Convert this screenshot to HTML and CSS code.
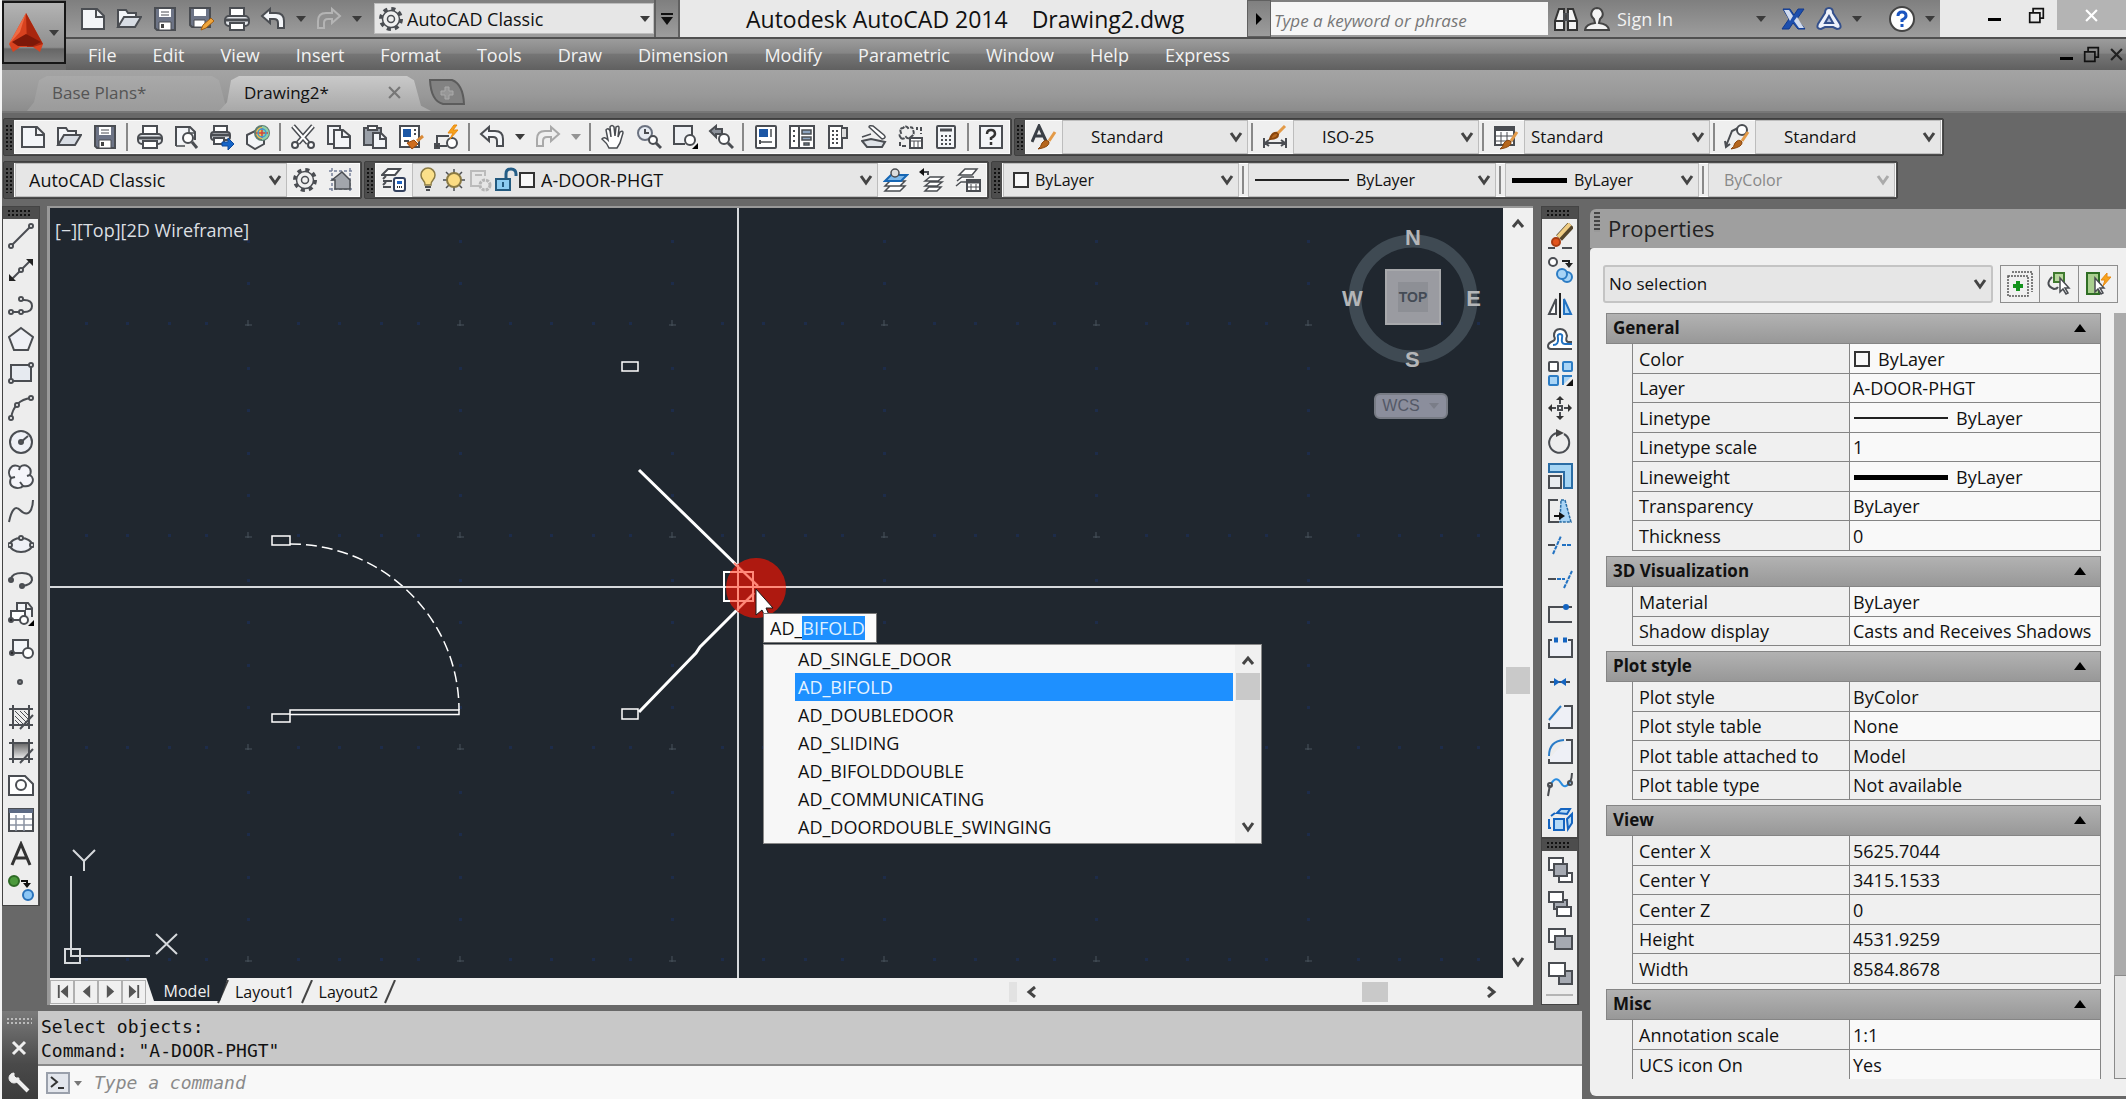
FILE: index.html
```html
<!DOCTYPE html>
<html lang="en">
<head>
<meta charset="utf-8">
<title>Autodesk AutoCAD 2014 - Drawing2.dwg</title>
<link rel="stylesheet" href="styles.css">
</head>
<body>
<svg class="sprite" aria-hidden="true">
  <defs>
    <linearGradient id="gridfade" x1="0" y1="0" x2="0" y2="1"><stop offset="0" stop-color="#666"/><stop offset="1" stop-color="#eee"/></linearGradient>
    <pattern id="minor" x="35" y="31" width="212" height="212" patternUnits="userSpaceOnUse">
      <g fill="#1d2c4a"><path d="M41 83h3v3h-3zM83 83h3v3h-3zM120 83h3v3h-3zM0 83h3v3h-3zM162 1h3v3h-3zM162 43h3v3h-3zM162 128h3v3h-3zM162 170h3v3h-3z"/></g>
      <path d="M163 81v6M160 86h7" stroke="#47525c" stroke-width="1"/>
    </pattern>
  </defs>
  <symbol id="i-new" viewBox="0 0 26 26"><path d="M2 3h15l7 7v13H2z" fill="#f3f5f8"/><path d="M16 3v8h8"/></symbol>
  <symbol id="i-open" viewBox="0 0 26 26"><path d="M2 21V4h8l2 3h8v4" fill="#f3f5f8"/><path d="M2 21l6-10h17l-6 10z" fill="#d8dde4"/></symbol>
  <symbol id="i-save" viewBox="0 0 26 26"><path d="M3 2h20v22H5l-2-2z" fill="#6d7486"/><path d="M7 3h12v8H7z" fill="#fff" stroke="none"/><path d="M9 6h8M9 9h8" stroke-width="1"/><path d="M7 16h12v8H7z" fill="#fff" stroke-width="1"/><path d="M9 18h3v4H9z" fill="#444" stroke="none"/></symbol>
  <symbol id="i-saveas" viewBox="0 0 26 26"><path d="M2 2h20v19H4l-2-2z" fill="#6d7486"/><path d="M6 3h12v7H6z" fill="#fff" stroke="none"/><path d="M6 14h11v7H6z" fill="#fff" stroke-width="1"/><path d="M13 24l2-5 8-7 3 3-8 7z" fill="#f0a63c" stroke="#a35f12" stroke-width="1"/></symbol>
  <symbol id="i-print" viewBox="0 0 26 26"><path d="M6 11V2h14v9" fill="#fff"/><rect x="1" y="10" width="24" height="10" rx="4" fill="#e4e7eb"/><path d="M2 14h22" stroke-width="3"/><path d="M6 17h14v7H6z" fill="#fff"/></symbol>
  <symbol id="i-preview" viewBox="0 0 26 26"><path d="M3 22V3h14l5 5v8" fill="#f3f5f8"/><path d="M3 22h9M16 3v6h6" stroke-width="1.500"/><circle cx="15" cy="14" r="5" fill="#fff"/><path d="M19 18l5 6" stroke-width="3"/></symbol>
  <symbol id="i-publish" viewBox="0 0 26 26"><path d="M5 9V2h13v7" fill="#fff"/><rect x="2" y="8" width="19" height="8" rx="3" fill="#e4e7eb"/><path d="M3 11h17" stroke-width="3"/><path d="M5 14h10v6H5z" fill="#fff"/><path d="M13 18h6v-4l6 6-6 6v-4h-6z" fill="#1565c8" stroke="#0d4a9c" stroke-width="1"/></symbol>
  <symbol id="i-dwf" viewBox="0 0 26 26"><path d="M2 11l8-4 9 4v9l-9 5-8-5z" fill="#f3f5f8"/><circle cx="17" cy="9" r="7" fill="#f6c34a" stroke="#5f7d72"/><path d="M17 2a7 7 0 0 1 0 14z" fill="#8fd0a8" stroke="none"/><path d="M17 4v10M11 9h12" stroke="#d1453b" stroke-width="1.500"/><circle cx="17" cy="9" r="4" stroke="#3a9ad8" stroke-width="1.500"/></symbol>
  <symbol id="i-cut" viewBox="0 0 26 26"><path d="M3 2l15 17M23 2L8 19" stroke-width="5"/><path d="M3 2l15 17M23 2L8 19" stroke="#fff" stroke-width="2"/><circle cx="5" cy="21" r="3" fill="#fff"/><circle cx="21" cy="21" r="3" fill="#fff"/></symbol>
  <symbol id="i-copy" viewBox="0 0 26 26"><path d="M7 20H2V2h12v3" fill="#f3f5f8"/><path d="M8 6h9l7 6v12H8z" fill="#f3f5f8"/><path d="M16 6v7h8"/></symbol>
  <symbol id="i-paste" viewBox="0 0 26 26"><path d="M2 4h17v17H2z" fill="#9aa0a8"/><path d="M6 2h9v4H6z" fill="#fff"/><path d="M11 9h8l5 5v10H11z" fill="#f3f5f8"/><path d="M18 9v6h6"/></symbol>
  <symbol id="i-match" viewBox="0 0 26 26"><path d="M2 2h19v21H2z" fill="#fff"/><path d="M5 5h8v8H5z" fill="#1c57a5" stroke="none"/><path d="M16 6h2M16 10h2M6 17h5"/><path d="M9 19l7-3 4 4-6 5z" fill="#cf6d1c" stroke="#9c4a0b" stroke-width="1"/><path d="M19 17l6-5" stroke="#d98a38" stroke-width="3"/></symbol>
  <symbol id="i-block" viewBox="0 0 26 26"><path d="M3 22V12h12"/><path d="M3 22h10"/><circle cx="18" cy="19" r="5" fill="#fff"/><path d="M20 1l-6 8h5l-3 6 8-9h-5l4-5z" fill="#f7a21b" stroke="#e88a10" stroke-width="1"/><path d="M1 20h4v4H1z" fill="#444"/></symbol>
  <symbol id="i-undo" viewBox="0 0 26 26"><path d="M2 10l8-7v4h6q8 0 8 8v7h-6v-5q0-4-4-4h-4v4z" fill="#f3f5f8"/></symbol>
  <symbol id="i-redo" viewBox="0 0 26 26"><path d="M24 10l-8-7v4h-6q-8 0-8 8v7h6v-5q0-4 4-4h4v4z"/></symbol>
  <symbol id="i-pan" viewBox="0 0 26 26"><path d="M9 24q-2-5-7-9 2-3 6 1L6 6q2-3 4 1l1 6-1-10q2-3 4 0l1 9 1-9q3-2 3 1l-1 9 2-5q3-2 3 1l-3 10-3 5z" fill="#fff" stroke-width="1.500"/></symbol>
  <symbol id="i-zoom" viewBox="0 0 26 26"><circle cx="9" cy="9" r="7" fill="#e6ebf2" stroke="#6b7280"/><path d="M9 5v4h4"/><circle cx="17" cy="16" r="4" fill="#fff"/><path d="M20 19l5 5" stroke-width="3"/></symbol>
  <symbol id="i-zoomwin" viewBox="0 0 26 26"><path d="M13 20H2V2h18v9" fill="#eef0f3"/><circle cx="18" cy="16" r="5" fill="#fff"/><path d="M26 19v6h-6z" fill="#000" stroke="none"/></symbol>
  <symbol id="i-zoomprev" viewBox="0 0 26 26"><path d="M2 7l6-5v3h6v5H8v3z" fill="#8b9099"/><circle cx="16" cy="15" r="5" fill="#fff"/><path d="M20 19l5 5" stroke-width="3"/></symbol>
  <symbol id="i-props" viewBox="0 0 26 26"><rect x="3" y="2" width="20" height="22" rx="1" fill="#fff"/><path d="M6 5h9v8H6z" fill="#1c57a5" stroke="none"/><path d="M18 5v8M8 18h11" stroke-width="1.500"/><path d="M7 16v4"/></symbol>
  <symbol id="i-dcenter" viewBox="0 0 26 26"><rect x="1" y="2" width="24" height="22" fill="#fff"/><path d="M10 2v22"/><path d="M5 6v2M5 11v2M5 16v2"/><path d="M13 6h9v4h-9zM13 13h9v3h-9zM15 19h5v2h-5z" fill="#8da4bf" stroke-width="1.500"/></symbol>
  <symbol id="i-palette" viewBox="0 0 26 26"><path d="M4 2h13v22H4z" fill="#fff"/><path d="M17 4h5v10h-5" fill="#ddd"/><path d="M7 7h8M7 11h8M7 15h8M7 19h8" stroke-dasharray="2 2"/></symbol>
  <symbol id="i-sheets" viewBox="0 0 26 26"><path d="M1 17l9-2 14 3-3 5H6z" fill="#dfe3e8"/><path d="M1 13l9-3M8 3l13 12q5-1 2-4L12 2q-4-1-4 1z" fill="#fff" stroke-width="1.500"/></symbol>
  <symbol id="i-markup" viewBox="0 0 26 26"><path d="M4 14q-3-3 0-5-2-5 2-5 3-3 5 0 5-2 5 2 2 4-1 6-4 4-6 1-3 3-5 1z" stroke-dasharray="4 1"/><path d="M20 3v3M24 3v7M3 18v4h6" stroke-dasharray="4 2"/><path d="M13 14h12v10H13z" fill="#fff"/><path d="M13 17h12M17 17v7M21 17v7" stroke-width="1"/></symbol>
  <symbol id="i-calc" viewBox="0 0 26 26"><rect x="4" y="2" width="18" height="22" rx="1" fill="#f3f5f8"/><path d="M7 6h12" stroke-width="3"/><path d="M8 12h11M8 16h11M8 20h11" stroke-dasharray="2 2"/></symbol>
  <symbol id="i-help" viewBox="0 0 26 26"><rect x="2" y="2" width="22" height="22" fill="#f3f5f8"/><path d="M9 10q0-4 4-4t4 4q0 2-4 4v2M13 18v3" stroke="#333" stroke-width="2.500"/></symbol>
  <symbol id="i-gear" viewBox="0 0 26 26"><circle cx="13" cy="13" r="10" stroke-width="4" stroke-dasharray="4 3.850"/><circle cx="13" cy="13" r="8.500" fill="#f0f0f0" stroke-width="1.500"/><circle cx="13" cy="13" r="3.500" stroke-width="1.500"/></symbol>
  <symbol id="i-home" viewBox="0 0 26 26"><path d="M1 4h24M1 22h24M4 1v24M22 1v24" stroke="#77819b" stroke-dasharray="3 2" stroke-width="1.500"/><path d="M4 13l10-8 8 8v9H7v-9z" fill="#a2a6ac" stroke-width="1.500"/></symbol>
  <symbol id="i-layers" viewBox="0 0 26 26"><path d="M1 8l6-6h12l-5 6zM2 14h9M2 12l3-3M2 20h8M2 18l3-3" fill="#fff"/><rect x="13" y="11" width="11" height="13" rx="2" fill="#fff" stroke="#33415e"/><path d="M16 14h5v3h-5z" fill="#1e62c0" stroke="none"/><path d="M16 20h5" stroke="#333" stroke-dasharray="1 1"/></symbol>
  <symbol id="i-bulb" viewBox="0 0 26 26"><path d="M10 18q0-3-2-5a7 7 0 1 1 10 0q-2 2-2 5z" fill="#fbe08a" stroke="#8a7a44" stroke-width="1.500"/><path d="M10 20h6M11 23h4"/></symbol>
  <symbol id="i-sun" viewBox="0 0 26 26"><path d="M13 2v22M2 13h22M5 5l16 16M21 5L5 21" stroke-width="1.500"/><circle cx="13" cy="13" r="7" fill="#fbdc83" stroke="#8a7a44"/></symbol>
  <symbol id="i-vpfreeze" viewBox="0 0 26 26"><path d="M14 4h-10v15h8M14 4h4v5M8 8h7" stroke="#bbb"/><circle cx="18" cy="18" r="5" stroke="#b5b5b5" stroke-width="3" stroke-dasharray="3 1"/></symbol>
  <symbol id="i-lock" viewBox="0 0 26 26"><path d="M13 12V7q0-5 5-5t5 5v2" stroke="#245d86" stroke-width="3"/><rect x="3" y="12" width="14" height="11" fill="#8ccbf0" stroke="#23597e"/><path d="M10 15v5" stroke="#23597e"/></symbol>
  <symbol id="i-laycur" viewBox="0 0 26 26"><path d="M2 24l5-5h15l-5 5zM2 19l5-5h15l-5 5z" fill="#fff" stroke-width="1.500"/><path d="M2 14l6-6h16l-6 6z" fill="#7db8ea" stroke="#1767b5"/><circle cx="12" cy="6" r="4" fill="#ddd" stroke-width="1.500"/></symbol>
  <symbol id="i-layprev" viewBox="0 0 26 26"><path d="M6 24l4-4h12l-4 4zM6 19l5-4h12l-5 4zM6 14l5-4h13l-5 4z" fill="#fff" stroke-width="1.500"/><path d="M3 5h6v3"/><path d="M0 5l5-4v8z" fill="#111" stroke="none"/></symbol>
  <symbol id="i-laystate" viewBox="0 0 26 26"><path d="M4 8l6-6h12l-5 6zM2 14l5-4h12M1 19l5-4h6" fill="#fff" stroke-width="1.500"/><path d="M12 13h13v11H12z" fill="#fff"/><path d="M12 15h13" stroke-width="3"/><path d="M16 17v7M21 17v7M12 20h13" stroke-width="1"/></symbol>
  <symbol id="i-brush" viewBox="0 0 26 26"><path d="M7 25q3-2 4-6 4-5 7-1 1 5-11 7z" fill="#b5661d" stroke="#8a460c" stroke-width="1"/><path d="M18 17l6-9" stroke="#e39a48" stroke-width="3"/></symbol>
  <symbol id="i-txtstyle" viewBox="0 0 26 26"><path d="M1 18L8 2l7 15M4 12h8" stroke="#3a3f46" stroke-width="3"/><use href="#i-brush"/></symbol>
  <symbol id="i-dimstyle" viewBox="0 0 26 26"><path d="M2 14v10M24 14v10M3 19h20M7 16l-4 3 4 3M19 16l4 3-4 3"/><path d="M8 15q2-7 8-6 1 6-8 6z" fill="#b5661d" stroke="#8a460c"/><path d="M16 9l7-7" stroke="#e39a48" stroke-width="3"/></symbol>
  <symbol id="i-tblstyle" viewBox="0 0 26 26"><path d="M2 3h19v18H2z" fill="#fff"/><path d="M2 5h19" stroke-width="4"/><path d="M8 8v13M14 8v13M2 12h19M2 17h19" stroke-width="1"/><use href="#i-brush"/></symbol>
  <symbol id="i-mlstyle" viewBox="0 0 26 26"><path d="M2 22L8 7l6-3M1 17l1 6 4-3"/><circle cx="18" cy="6" r="5" fill="#fff"/><use href="#i-brush"/></symbol>
  <symbol id="i-line" viewBox="0 0 26 26"><path d="M3 23L22 4"/><circle cx="3" cy="23" r="2" fill="#fff"/><circle cx="23" cy="3" r="2" fill="#fff"/></symbol>
  <symbol id="i-xline" viewBox="0 0 26 26"><path d="M3 23L23 3"/><circle cx="13" cy="13" r="2" fill="#fff"/><path d="M18 2h7v7zM1 17v7h7z" fill="#222" stroke="none"/></symbol>
  <symbol id="i-pline" viewBox="0 0 26 26"><path d="M3 20h13q8 0 8-6t-8-6h-2"/><g fill="#fff"><circle cx="3" cy="20" r="2"/><circle cx="13" cy="20" r="2"/><circle cx="13" cy="7" r="2"/></g></symbol>
  <symbol id="i-polygon" viewBox="0 0 26 26"><path d="M13 2l12 9-5 13H6L1 11z" fill="#eef0f6"/></symbol>
  <symbol id="i-rect" viewBox="0 0 26 26"><path d="M3 5h20v16H3z" fill="#e6eaf0"/><circle cx="3" cy="21" r="2" fill="#fff"/><circle cx="23" cy="5" r="2" fill="#fff"/></symbol>
  <symbol id="i-arc" viewBox="0 0 26 26"><path d="M3 23Q6 5 23 3"/><g fill="#fff"><circle cx="3" cy="23" r="2"/><circle cx="9" cy="10" r="2"/><circle cx="23" cy="3" r="2"/></g></symbol>
  <symbol id="i-circle" viewBox="0 0 26 26"><circle cx="13" cy="13" r="11" fill="#eef0f6"/><path d="M13 13l7-6"/><circle cx="13" cy="13" r="2" fill="#555"/></symbol>
  <symbol id="i-cloud" viewBox="0 0 26 26"><path d="M12 4C17 0 25 4 22 12 28 16 24 25 15 23 11 27 -1 25 3 15 -2 9 3 -1 12 4z" fill="#f5f5fa"/><path d="M12 4l-1 3M22 12l-3 1M15 23l-3-4M3 15l4-1"/></symbol>
  <symbol id="i-spline" viewBox="0 0 26 26"><path d="M1 24Q5 5 12 12t11 0q2-5 2-10"/></symbol>
  <symbol id="i-ellipse" viewBox="0 0 26 26"><ellipse cx="13" cy="13" rx="11" ry="7" fill="#eef0f6"/><g fill="#fff"><circle cx="2" cy="13" r="2"/><circle cx="24" cy="13" r="2"/><circle cx="13" cy="6" r="2"/></g></symbol>
  <symbol id="i-earc" viewBox="0 0 26 26"><path d="M3 13Q4 7 14 7t10 7q-1 5-10 6"/><circle cx="3" cy="14" r="2" fill="#555"/><circle cx="14" cy="20" r="2" fill="#555"/></symbol>
  <symbol id="i-insert" viewBox="0 0 26 26"><path d="M9 9V2h11l4 5v9M18 2v6h6" fill="#f3f5f8"/><path d="M12 19H3v-9h14v5" fill="#fff"/><circle cx="16" cy="19" r="4" fill="#fff"/><path d="M26 19v6h-6z" fill="#000" stroke="none"/><circle cx="3" cy="19" r="2" fill="#222"/></symbol>
  <symbol id="i-makeblk" viewBox="0 0 26 26"><path d="M5 18V5h15v12M5 18h12" fill="#f3f5f8"/><circle cx="20" cy="18" r="5" fill="#fff"/><circle cx="4" cy="18" r="2" fill="#222"/></symbol>
  <symbol id="i-point" viewBox="0 0 26 26"><circle cx="12" cy="13" r="2" fill="#888"/></symbol>
  <symbol id="i-hatch" viewBox="0 0 26 26"><path d="M1 5h24M1 21h24M5 1v24M21 1v24"/><path d="M7 7l13 13M7 12l8 8M12 7l8 8M7 16l4 4M16 7l4 4" stroke-width="1"/><path d="M12 25L25 11"/></symbol>
  <symbol id="i-gradient" viewBox="0 0 26 26"><path d="M5 5h16v16H5z" fill="url(#gridfade)"/><path d="M1 5h24M1 21h24M5 1v24M21 1v24M12 25L25 11"/></symbol>
  <symbol id="i-region" viewBox="0 0 26 26"><path d="M1 4h16l8 8v11H1z" fill="#fff"/><circle cx="13" cy="13" r="5"/></symbol>
  <symbol id="i-table" viewBox="0 0 26 26"><path d="M1 2h24v22H1z" fill="#fff"/><path d="M1 4h24" stroke="#5d6b85" stroke-width="4"/><path d="M8 8v16M16 8v16M2 12h22M2 18h22" stroke="#8b93a2" stroke-width="1.500"/></symbol>
  <symbol id="i-mtext" viewBox="0 0 26 26"><path d="M4 24L13 3l9 21M7 17h12" stroke="#333" stroke-width="3"/></symbol>
  <symbol id="i-addsel" viewBox="0 0 26 26"><circle cx="6" cy="6" r="5" fill="#4c9a3c" stroke="#2e6a25"/><circle cx="20" cy="20" r="5" fill="#8cc6f5" stroke="#2a72ba"/><path d="M13 6h6v3" stroke="#111"/><path d="M15 8h8l-4 5z" stroke="none" fill="#111"/></symbol>
  <symbol id="i-erase" viewBox="0 0 26 26"><path d="M1 25h7M15 25h10"/><path d="M12 15L24 2" stroke="#54452b" stroke-width="8"/><path d="M11 14L23 1" stroke="#f0cd84" stroke-width="4"/><circle cx="9" cy="19" r="4" fill="#e2531c" stroke="#a83c12"/></symbol>
  <symbol id="i-copyobj" viewBox="0 0 26 26"><circle cx="6" cy="5" r="4" fill="#fff"/><path d="M15 4h7v2" stroke="#222"/><path d="M18 6h8l-4 5z" stroke="none" fill="#222"/><circle cx="20" cy="20" r="5" fill="#a8d4f6" stroke="#2c7cc4"/><circle cx="15" cy="17" r="5" fill="#a8d4f6" stroke="#2c7cc4"/></symbol>
  <symbol id="i-mirror" viewBox="0 0 26 26"><path d="M13 1v25" stroke="#222"/><path d="M9 7v15H2z" fill="#fff"/><path d="M17 7v15h7z" fill="#a8d4f6" stroke="#2272c2"/></symbol>
  <symbol id="i-offset" viewBox="0 0 26 26"><path d="M25 23H4q-3 0-3-3t5-5q3-1 1-5 0-7 6-7t7 7q-2 5 1 6h4" fill="#fff"/><path d="M25 18h-7q-4 0-3-6 1-4-2-4t-2 4q1 7-5 7" stroke="#2272c2"/></symbol>
  <symbol id="i-array" viewBox="0 0 26 26"><rect x="2" y="2" width="9" height="9" rx="1" fill="#fff"/><g fill="#a8d4f6" stroke="#2c7cc4"><rect x="16" y="2" width="9" height="9" rx="1"/><rect x="2" y="16" width="9" height="9" rx="1"/><path d="M16 25v-9h9"/></g><path d="M26 19v7h-7z" fill="#111" stroke="none"/></symbol>
  <symbol id="i-move" viewBox="0 0 26 26"><path d="M11 11h4v4h-4zM13 9V3M13 17v6M9 13H3M17 13h6"/><path d="M9 5l4-4 4 4zM9 21l4 4 4-4zM5 9l-4 4 4 4zM21 9l4 4-4 4z" fill="#333" stroke="none"/></symbol>
  <symbol id="i-rotate" viewBox="0 0 26 26"><path d="M17 5a10 10 0 1 1-7-1"/><path d="M9 0l8 4-8 4z" fill="#444" stroke="none"/></symbol>
  <symbol id="i-scale" viewBox="0 0 26 26"><path d="M2 9V1h23v24h-8V9z" fill="#a5d5f4" stroke="#2a6da5"/><rect x="2" y="13" width="12" height="12" fill="#e9ecef"/></symbol>
  <symbol id="i-stretch" viewBox="0 0 26 26"><path d="M11 2H2v22h10"/><path d="M14 2h4l6 22H13z" fill="#a8d4f6" stroke="#2a6da5" stroke-dasharray="3 1" stroke-width="1.500"/><path d="M7 18h7" stroke="#111"/><path d="M12 14l6 4-6 4z" stroke="none" fill="#111"/></symbol>
  <symbol id="i-trim" viewBox="0 0 26 26"><path d="M1 13h7"/><path d="M6 22L14 4M15 13h10" stroke="#2272c2" stroke-dasharray="4 1"/></symbol>
  <symbol id="i-extend" viewBox="0 0 26 26"><path d="M1 13h8"/><path d="M10 13h8M17 22l8-17" stroke="#2272c2" stroke-dasharray="4 1"/></symbol>
  <symbol id="i-breakpt" viewBox="0 0 26 26"><path d="M25 21H2V6h23"/><circle cx="19" cy="6" r="3" fill="#1464c0" stroke="none"/></symbol>
  <symbol id="i-break" viewBox="0 0 26 26"><path d="M5 5H2v17h23V5h-4" fill="#eef0f6"/><path d="M7 5h4M16 5h4" stroke="#1464c0" stroke-width="5"/></symbol>
  <symbol id="i-join" viewBox="0 0 26 26"><path d="M3 13h20"/><path d="M7 9l6 4-6 4zM19 9l-6 4 6 4z" fill="#1464c0" stroke="none"/></symbol>
  <symbol id="i-chamfer" viewBox="0 0 26 26"><path d="M2 19v5h23V2h-8" fill="#eef0f6"/><path d="M2 16L14 2" stroke="#2a7cc8"/></symbol>
  <symbol id="i-fillet" viewBox="0 0 26 26"><path d="M2 21v4h23V2h-6" fill="#eef0f6"/><path d="M2 18Q2 3 17 2" stroke="#2a7cc8"/></symbol>
  <symbol id="i-blend" viewBox="0 0 26 26"><path d="M1 24q1-6 2-11M23 10q2-4 2-9"/><path d="M4 12q5-9 10-1 4 7 9-1" stroke="#2a8ce0"/><circle cx="3" cy="13" r="2"/><circle cx="23" cy="11" r="2"/></symbol>
  <symbol id="i-explode" viewBox="0 0 26 26"><g fill="#b5daf7" stroke="#1464c0"><path d="M7 12h10v11H7zM10 6l4-4h9l-3 5zM20 12l5-5v9l-4 6zM4 9l4-3M2 12v9h2"/></g></symbol>
  <symbol id="i-front" viewBox="0 0 26 26"><rect x="2" y="1" width="14" height="12" fill="#fff"/><rect x="12" y="16" width="13" height="9" fill="#fff"/><rect x="7" y="7" width="13" height="12" fill="#a5a9b1"/></symbol>
  <symbol id="i-back" viewBox="0 0 26 26"><rect x="7" y="9" width="13" height="9" fill="#a5a9b1"/><rect x="2" y="1" width="14" height="10" fill="#fff"/><rect x="10" y="16" width="14" height="9" fill="#fff"/></symbol>
  <symbol id="i-above" viewBox="0 0 26 26"><rect x="2" y="3" width="16" height="13" fill="#fff"/><rect x="8" y="10" width="17" height="13" fill="#a5a9b1"/></symbol>
  <symbol id="i-under" viewBox="0 0 26 26"><rect x="12" y="11" width="13" height="13" fill="#a5a9b1"/><rect x="2" y="3" width="16" height="13" fill="#fff"/></symbol>
  <symbol id="i-binoc" viewBox="0 0 26 26"><path d="M2 24v-9l4-12h5v21zM24 24v-9L20 3h-5v21z" fill="#f4f4f4" stroke="#333"/><path d="M11 8h4v6h-4z" fill="#444"/><path d="M2 15h9M15 15h9" stroke="#333"/></symbol>
  <symbol id="i-user" viewBox="0 0 26 26"><path d="M13 2a6 6 0 0 1 3 11l-1 4q9 1 10 7H1q1-6 10-7l-1-4a6 6 0 0 1 3-11z" fill="#f4f4f4" stroke="#444"/></symbol>
  <symbol id="i-exch" viewBox="0 0 26 26"><path d="M3 3h7l4 6 4-6h6l-7 10 8 10h-7l-5-6-4 6H2l7-10z" fill="#1d4fae" stroke="#12398a" stroke-width="1"/><path d="M4 4h5l4 6-3 5zM14 15l3-4 7 11h-5z" fill="#fff" stroke="none" opacity=".8"/></symbol>
  <symbol id="i-a360" viewBox="0 0 26 26"><path d="M13 2q4 0 4 5l7 11q2 5-3 5l-4-2H9l-4 2q-5 0-3-5L9 7q0-5 4-5z" fill="#eef2fb" stroke="#34508c"/><path d="M13 10l4 7H9z" fill="#aebddd" stroke="#34508c"/></symbol>
  <symbol id="i-info" viewBox="0 0 26 26"><circle cx="13" cy="13" r="12" fill="#fff" stroke="#444"/><path d="M9 10q0-4 4-4t4 4q0 2-4 4v2M13 18v3" stroke="#1b55c0" stroke-width="3"/></symbol>
  <symbol id="i-chev" viewBox="0 0 12 12"><path d="M1 2l5 7 5-7" stroke-width="3"/></symbol>
  <symbol id="i-up" viewBox="0 0 12 12"><path d="M1 9l5-6 5 6" stroke-width="3"/></symbol>
  <symbol id="i-left" viewBox="0 0 12 12"><path d="M9 1L3 6l6 5" stroke-width="3"/></symbol>
  <symbol id="i-right" viewBox="0 0 12 12"><path d="M3 1l6 5-6 5" stroke-width="3"/></symbol>
  <symbol id="i-tri" viewBox="0 0 12 12"><path d="M1 3h10L6 9z" fill="#3b3b3b" stroke="none"/></symbol>
  <symbol id="i-bartri" viewBox="0 0 12 12"><path d="M0 0h12v2H0zM0 4h12l-6 8z" fill="#111" stroke="none"/></symbol>
  <symbol id="i-triup" viewBox="0 0 12 12"><path d="M0 10h12L6 2z" fill="#000" stroke="none"/></symbol>
  <symbol id="i-restore" viewBox="0 0 20 20"><path d="M2 7h12v11H2zM6 7V2h12v11h-4"/></symbol>
</svg>

<div class="app">
  <header class="head">
    <button class="appbtn" aria-label="Application menu">
      <svg class="alogo" viewBox="0 0 36 42"><path d="M18 1l17 31-3 8-7-5H12l-7 5-4-8z" fill="#d8421f"/><path d="M18 1l7 34h-6zM18 1l17 31-10 3z" fill="#a8260e"/><path d="M18 1L12 20 1 32z" fill="#ef6a43"/><path d="M4 30l14-8 15 8-8 4H10z" fill="#7d1808"/></svg>
      <svg class="mini"><use href="#i-tri"/></svg>
    </button>
    <div class="titlebar">
      <nav class="qat" aria-label="Quick access">
        <button class="tb" aria-label="New"><svg class="ico"><use href="#i-new"/></svg></button>
        <button class="tb" aria-label="Open"><svg class="ico"><use href="#i-open"/></svg></button>
        <button class="tb" aria-label="Save"><svg class="ico"><use href="#i-save"/></svg></button>
        <button class="tb" aria-label="Save as"><svg class="ico"><use href="#i-saveas"/></svg></button>
        <button class="tb" aria-label="Plot"><svg class="ico"><use href="#i-print"/></svg></button>
        <button class="tb" aria-label="Undo"><svg class="ico"><use href="#i-undo"/></svg></button>
        <button class="drop" aria-label="Undo list"><svg class="mini"><use href="#i-tri"/></svg></button>
        <button class="tb" aria-label="Redo"><svg class="ico pale"><use href="#i-redo"/></svg></button>
        <button class="drop" aria-label="Redo list"><svg class="mini"><use href="#i-tri"/></svg></button>
      </nav>
      <div class="combo wsbox"><svg class="ico"><use href="#i-gear"/></svg><select aria-label="Workspace"><option>AutoCAD Classic</option></select><svg class="mini"><use href="#i-tri"/></svg></div>
      <button class="custom" aria-label="Customize toolbar"><svg class="mini"><use href="#i-bartri"/></svg></button>
      <h1 class="title"><span>Autodesk AutoCAD 2014</span><span>Drawing2.dwg</span></h1>
      <button class="searchgo" aria-label="Expand search"></button>
      <input class="search" type="text" aria-label="Search" placeholder="Type a keyword or phrase">
      <div class="info">
        <button class="tb" aria-label="Find"><svg class="ico"><use href="#i-binoc"/></svg></button>
        <button class="signin"><svg class="ico"><use href="#i-user"/></svg><span>Sign In</span><svg class="mini"><use href="#i-tri"/></svg></button>
        <button class="tb" aria-label="Exchange"><svg class="ico"><use href="#i-exch"/></svg></button>
        <button class="tb" aria-label="Autodesk 360"><svg class="ico"><use href="#i-a360"/></svg></button>
        <button class="drop" aria-label="More"><svg class="mini"><use href="#i-tri"/></svg></button>
        <button class="tb helpbtn" aria-label="Help"><svg class="ico"><use href="#i-info"/></svg></button>
        <button class="drop" aria-label="Help list"><svg class="mini"><use href="#i-tri"/></svg></button>
      </div>
      <div class="winctl">
        <button aria-label="Minimize"><i class="dash"></i></button>
        <button aria-label="Restore"><svg class="rest"><use href="#i-restore"/></svg></button>
        <button class="close" aria-label="Close"><svg class="xs" viewBox="0 0 12 12"><path d="M1 1l10 10M11 1L1 11"/></svg></button>
      </div>
    </div>
    <nav class="menubar" aria-label="Menu">
      <a href="#">File</a><a href="#">Edit</a><a href="#">View</a><a href="#">Insert</a><a href="#">Format</a><a href="#">Tools</a><a href="#">Draw</a><a href="#">Dimension</a><a href="#">Modify</a><a href="#">Parametric</a><a href="#">Window</a><a href="#">Help</a><a href="#">Express</a>
      <div class="docctl">
        <button aria-label="Minimize drawing"><i class="dash"></i></button>
        <button aria-label="Restore drawing"><svg class="rest"><use href="#i-restore"/></svg></button>
        <button aria-label="Close drawing"><svg class="xs" viewBox="0 0 12 12"><path d="M1 1l10 10M11 1L1 11"/></svg></button>
      </div>
    </nav>
  </header>

  <div class="tabs">
    <div class="tab"><button>Base Plans*</button></div>
    <div class="tab on"><button>Drawing2*</button><button class="tabx" aria-label="Close tab"><svg class="xs" viewBox="0 0 12 12"><path d="M1 1l10 10M11 1L1 11"/></svg></button></div>
    <button class="newtab" aria-label="New tab"><svg viewBox="0 0 36 26"><path d="M1 1h22q11 4 12 24H14Q2 22 1 1z" fill="#828282" stroke="#5c5c5c" stroke-width="2"/><path d="M16 8h4v4h4v4h-4v4h-4v-4h-4v-4h4z" fill="#969696" stroke="#aaa"/></svg></button>
  </div>

  <div class="bars">
    <div class="barrow">
      <div class="bar"><i class="grip"></i><div class="barbody">
        <button class="tb" aria-label="New"><svg class="ico"><use href="#i-new"/></svg></button>
        <button class="tb" aria-label="Open"><svg class="ico"><use href="#i-open"/></svg></button>
        <button class="tb" aria-label="Save"><svg class="ico"><use href="#i-save"/></svg></button>
        <i class="sep"></i>
        <button class="tb" aria-label="Plot"><svg class="ico"><use href="#i-print"/></svg></button>
        <button class="tb" aria-label="Plot preview"><svg class="ico"><use href="#i-preview"/></svg></button>
        <button class="tb" aria-label="Publish"><svg class="ico"><use href="#i-publish"/></svg></button>
        <button class="tb" aria-label="3D DWF"><svg class="ico"><use href="#i-dwf"/></svg></button>
        <i class="sep"></i>
        <button class="tb" aria-label="Cut"><svg class="ico"><use href="#i-cut"/></svg></button>
        <button class="tb" aria-label="Copy"><svg class="ico"><use href="#i-copy"/></svg></button>
        <button class="tb" aria-label="Paste"><svg class="ico"><use href="#i-paste"/></svg></button>
        <button class="tb" aria-label="Match properties"><svg class="ico"><use href="#i-match"/></svg></button>
        <button class="tb" aria-label="Block editor"><svg class="ico"><use href="#i-block"/></svg></button>
        <i class="sep"></i>
        <button class="tb" aria-label="Undo"><svg class="ico"><use href="#i-undo"/></svg></button>
        <button class="drop" aria-label="Undo list"><svg class="mini"><use href="#i-tri"/></svg></button>
        <button class="tb" aria-label="Redo"><svg class="ico pale"><use href="#i-redo"/></svg></button>
        <button class="drop dim" aria-label="Redo list"><svg class="mini"><use href="#i-tri"/></svg></button>
        <i class="sep"></i>
        <button class="tb" aria-label="Pan"><svg class="ico"><use href="#i-pan"/></svg></button>
        <button class="tb" aria-label="Zoom realtime"><svg class="ico"><use href="#i-zoom"/></svg></button>
        <button class="tb" aria-label="Zoom window"><svg class="ico"><use href="#i-zoomwin"/></svg></button>
        <button class="tb" aria-label="Zoom previous"><svg class="ico"><use href="#i-zoomprev"/></svg></button>
        <i class="sep"></i>
        <button class="tb" aria-label="Properties"><svg class="ico"><use href="#i-props"/></svg></button>
        <button class="tb" aria-label="Design center"><svg class="ico"><use href="#i-dcenter"/></svg></button>
        <button class="tb" aria-label="Tool palettes"><svg class="ico"><use href="#i-palette"/></svg></button>
        <button class="tb" aria-label="Sheet set manager"><svg class="ico"><use href="#i-sheets"/></svg></button>
        <button class="tb" aria-label="Markup set manager"><svg class="ico"><use href="#i-markup"/></svg></button>
        <button class="tb" aria-label="Calculator"><svg class="ico"><use href="#i-calc"/></svg></button>
        <i class="sep"></i>
        <button class="tb" aria-label="Help"><svg class="ico"><use href="#i-help"/></svg></button>
      </div></div>
      <div class="bar"><i class="grip"></i><div class="barbody">
        <button class="tb" aria-label="Text style"><svg class="ico"><use href="#i-txtstyle"/></svg></button>
        <div class="combo style far"><select aria-label="Text style name"><option>Standard</option></select><svg class="chev"><use href="#i-chev"/></svg></div>
        <i class="sep"></i>
        <button class="tb" aria-label="Dimension style"><svg class="ico"><use href="#i-dimstyle"/></svg></button>
        <div class="combo style far"><select aria-label="Dimension style name"><option>ISO-25</option></select><svg class="chev"><use href="#i-chev"/></svg></div>
        <i class="sep"></i>
        <button class="tb" aria-label="Table style"><svg class="ico"><use href="#i-tblstyle"/></svg></button>
        <div class="combo style"><select aria-label="Table style name"><option>Standard</option></select><svg class="chev"><use href="#i-chev"/></svg></div>
        <i class="sep"></i>
        <button class="tb" aria-label="Multileader style"><svg class="ico"><use href="#i-mlstyle"/></svg></button>
        <div class="combo style far"><select aria-label="Multileader style name"><option>Standard</option></select><svg class="chev"><use href="#i-chev"/></svg></div>
      </div></div>
    </div>
    <div class="barrow">
      <div class="bar"><i class="grip"></i><div class="barbody">
        <div class="combo space"><select aria-label="Workspaces"><option>AutoCAD Classic</option></select><svg class="chev"><use href="#i-chev"/></svg></div>
        <button class="tb" aria-label="Workspace settings"><svg class="ico"><use href="#i-gear"/></svg></button>
        <button class="tb" aria-label="My workspace"><svg class="ico"><use href="#i-home"/></svg></button>
      </div></div>
      <div class="bar"><i class="grip"></i><div class="barbody">
        <button class="tb" aria-label="Layer properties"><svg class="ico"><use href="#i-layers"/></svg></button>
        <div class="combo layer"><svg class="ico"><use href="#i-bulb"/></svg><svg class="ico"><use href="#i-sun"/></svg><svg class="ico"><use href="#i-vpfreeze"/></svg><svg class="ico"><use href="#i-lock"/></svg><i class="swatch"></i><select aria-label="Layer"><option>A-DOOR-PHGT</option></select><svg class="chev"><use href="#i-chev"/></svg></div>
        <button class="tb" aria-label="Make layer current"><svg class="ico"><use href="#i-laycur"/></svg></button>
        <button class="tb" aria-label="Layer previous"><svg class="ico"><use href="#i-layprev"/></svg></button>
        <button class="tb" aria-label="Layer states"><svg class="ico"><use href="#i-laystate"/></svg></button>
      </div></div>
      <div class="bar"><i class="grip"></i><div class="barbody">
        <div class="combo color"><i class="swatch"></i><select aria-label="Color"><option>ByLayer</option></select><svg class="chev"><use href="#i-chev"/></svg></div>
        <i class="sep"></i>
        <div class="combo ltype"><i class="thin"></i><select aria-label="Linetype"><option>ByLayer</option></select><svg class="chev"><use href="#i-chev"/></svg></div>
        <i class="sep"></i>
        <div class="combo lweight"><i class="thick"></i><select aria-label="Lineweight"><option>ByLayer</option></select><svg class="chev"><use href="#i-chev"/></svg></div>
        <i class="sep"></i>
        <div class="combo pstyle"><select aria-label="Plot style" disabled><option>ByColor</option></select><svg class="chev"><use href="#i-chev"/></svg></div>
      </div></div>
    </div>
  </div>

  <main class="main">
    <div class="left">
      <div class="work">
        <div class="dock">
          <i class="grip flat"></i>
          <div class="dockbody">
            <button aria-label="Line"><svg class="ico"><use href="#i-line"/></svg></button>
            <button aria-label="Construction line"><svg class="ico"><use href="#i-xline"/></svg></button>
            <button aria-label="Polyline"><svg class="ico"><use href="#i-pline"/></svg></button>
            <button aria-label="Polygon"><svg class="ico"><use href="#i-polygon"/></svg></button>
            <button aria-label="Rectangle"><svg class="ico"><use href="#i-rect"/></svg></button>
            <button aria-label="Arc"><svg class="ico"><use href="#i-arc"/></svg></button>
            <button aria-label="Circle"><svg class="ico"><use href="#i-circle"/></svg></button>
            <button aria-label="Revision cloud"><svg class="ico"><use href="#i-cloud"/></svg></button>
            <button aria-label="Spline"><svg class="ico"><use href="#i-spline"/></svg></button>
            <button aria-label="Ellipse"><svg class="ico"><use href="#i-ellipse"/></svg></button>
            <button aria-label="Ellipse arc"><svg class="ico"><use href="#i-earc"/></svg></button>
            <button aria-label="Insert block"><svg class="ico"><use href="#i-insert"/></svg></button>
            <button aria-label="Make block"><svg class="ico"><use href="#i-makeblk"/></svg></button>
            <button aria-label="Point"><svg class="ico"><use href="#i-point"/></svg></button>
            <button aria-label="Hatch"><svg class="ico"><use href="#i-hatch"/></svg></button>
            <button aria-label="Gradient"><svg class="ico"><use href="#i-gradient"/></svg></button>
            <button aria-label="Region"><svg class="ico"><use href="#i-region"/></svg></button>
            <button aria-label="Table"><svg class="ico"><use href="#i-table"/></svg></button>
            <button aria-label="Multiline text"><svg class="ico"><use href="#i-mtext"/></svg></button>
            <button aria-label="Add selected"><svg class="ico"><use href="#i-addsel"/></svg></button>
          </div>
        </div>

        <section class="frame">
          <div class="view">
            <div class="canvas">
              <svg class="draw" aria-label="Drawing">
                <rect width="100%" height="100%" fill="url(#minor)"/>
                <g transform="translate(-50 -207)" fill="none" stroke="#fff" stroke-width="2">
                  <path d="M272 535h18v9h-18zM272 713h18v8h-18zM290 713v-4h169v4.500H290M622 361h16v9h-16zM622 708h16v10h-16z" stroke-width="1.500"/>
                  <path d="M290 543A169 166 0 0 1 459 709" stroke-dasharray="11 5" stroke-width="1.500"/>
                  <path d="M639 469L758 585M754 592l-54 54-4 6-57 59" stroke-width="3"/>
                  <path d="M738 0v2000M0 586h3000" stroke="#d6d9dc"/>
                  <path d="M724 571h29v29h-29z"/>
                  <circle cx="756" cy="587" r="30" fill="#c8180a" fill-opacity=".85" stroke="none"/>
                  <path d="M726 586h60M738 564v46M724 571h29v29h-29M734 562l24 23M754 592l-16 16" stroke="#ff8a7a"/>
                  <path d="M724 571v29M724 571h6M724 600h6"/>
                  <path d="M756 588v26l6-5 4 9 4-2-4-9h7z" fill="#fff" stroke="#1b1b1b" stroke-width="1"/>
                  <g stroke="#d6d9dc"><path d="M71 875v80h79M65 948h15v14H65zM73 849l11 11 11-11M84 860v10M156 933l21 20M177 933l-21 20"/></g>
                </g>
              </svg>
              <button class="vlabel">[&minus;][Top][2D Wireframe]</button>
              <div class="compass">
                <svg viewBox="0 0 144 144"><circle cx="72" cy="74" r="58" fill="none" stroke="#3f4a53" stroke-width="13"/></svg>
                <span class="n">N</span><span class="w">W</span><span class="e">E</span><span class="s">S</span>
                <button class="top">TOP</button>
              </div>
              <button class="wcs">WCS<svg class="mini"><use href="#i-tri"/></svg></button>
              <div class="dyn">
                <input id="dyn" type="text" aria-label="Command" value="AD_BIFOLD">
                <div class="dynlist">
                  <ul role="listbox" aria-label="Suggestions">
                    <li role="option">AD_SINGLE_DOOR</li>
                    <li role="option" aria-selected="true" class="sel">AD_BIFOLD</li>
                    <li role="option">AD_DOUBLEDOOR</li>
                    <li role="option">AD_SLIDING</li>
                    <li role="option">AD_BIFOLDDOUBLE</li>
                    <li role="option">AD_COMMUNICATING</li>
                    <li role="option">AD_DOORDOUBLE_SWINGING</li>
                  </ul>
                  <div class="vs small"><svg class="chev"><use href="#i-up"/></svg><i class="thumb"></i><i class="grow"></i><svg class="chev"><use href="#i-chev"/></svg></div>
                </div>
              </div>
            </div>
            <div class="vs"><svg class="chev"><use href="#i-up"/></svg><i class="grow a"></i><i class="thumb"></i><i class="grow b"></i><svg class="chev"><use href="#i-chev"/></svg></div>
          </div>
          <div class="layouts">
            <div class="lnav">
              <button aria-label="First"><svg viewBox="0 0 14 14"><path d="M2 0h2v14H2zM13 0v14L5 7z"/></svg></button>
              <button aria-label="Previous"><svg viewBox="0 0 14 14"><path d="M11 0v14L3 7z"/></svg></button>
              <button aria-label="Next"><svg viewBox="0 0 14 14"><path d="M3 0v14l8-7z"/></svg></button>
              <button aria-label="Last"><svg viewBox="0 0 14 14"><path d="M10 0h2v14h-2zM1 0v14l8-7z"/></svg></button>
            </div>
            <button class="ltab model">Model</button>
            <svg class="slash" viewBox="0 0 12 24"><path d="M11 0L1 23"/></svg>
            <button class="ltab">Layout1</button>
            <svg class="slash" viewBox="0 0 12 24"><path d="M11 0L1 23"/></svg>
            <button class="ltab">Layout2</button>
            <svg class="slash" viewBox="0 0 12 24"><path d="M11 0L1 23"/></svg>
            <div class="hs"><svg class="chev"><use href="#i-left"/></svg><i class="grow a"></i><i class="thumb"></i><i class="grow b"></i><svg class="chev"><use href="#i-right"/></svg></div>
          </div>
        </section>

        <div class="rightdock">
          <div class="dock">
            <i class="grip flat"></i>
            <div class="dockbody">
              <button aria-label="Erase"><svg class="ico"><use href="#i-erase"/></svg></button>
              <button aria-label="Copy"><svg class="ico"><use href="#i-copyobj"/></svg></button>
              <button aria-label="Mirror"><svg class="ico"><use href="#i-mirror"/></svg></button>
              <button aria-label="Offset"><svg class="ico"><use href="#i-offset"/></svg></button>
              <button aria-label="Array"><svg class="ico"><use href="#i-array"/></svg></button>
              <button aria-label="Move"><svg class="ico"><use href="#i-move"/></svg></button>
              <button aria-label="Rotate"><svg class="ico"><use href="#i-rotate"/></svg></button>
              <button aria-label="Scale"><svg class="ico"><use href="#i-scale"/></svg></button>
              <button aria-label="Stretch"><svg class="ico"><use href="#i-stretch"/></svg></button>
              <button aria-label="Trim"><svg class="ico"><use href="#i-trim"/></svg></button>
              <button aria-label="Extend"><svg class="ico"><use href="#i-extend"/></svg></button>
              <button aria-label="Break at point"><svg class="ico"><use href="#i-breakpt"/></svg></button>
              <button aria-label="Break"><svg class="ico"><use href="#i-break"/></svg></button>
              <button aria-label="Join"><svg class="ico"><use href="#i-join"/></svg></button>
              <button aria-label="Chamfer"><svg class="ico"><use href="#i-chamfer"/></svg></button>
              <button aria-label="Fillet"><svg class="ico"><use href="#i-fillet"/></svg></button>
              <button aria-label="Blend curves"><svg class="ico"><use href="#i-blend"/></svg></button>
              <button aria-label="Explode"><svg class="ico"><use href="#i-explode"/></svg></button>
            </div>
          </div>
          <div class="dock rest2">
            <i class="grip flat"></i>
            <div class="dockbody">
              <button aria-label="Bring to front"><svg class="ico"><use href="#i-front"/></svg></button>
              <button aria-label="Send to back"><svg class="ico"><use href="#i-back"/></svg></button>
              <button aria-label="Bring above"><svg class="ico"><use href="#i-above"/></svg></button>
              <button aria-label="Send under"><svg class="ico"><use href="#i-under"/></svg></button>
              <i class="rule"></i>
            </div>
          </div>
        </div>
      </div>

      <section class="cmd">
        <div class="cmdside">
          <i class="dots"></i>
          <button aria-label="Close command line"><svg viewBox="0 0 16 16"><path d="M2 2l12 12M14 2L2 14" stroke="#eee" stroke-width="3"/></svg></button>
          <button aria-label="Customize"><svg class="wrench" viewBox="0 0 22 22"><path d="M8 8l12 12" stroke="#eee" stroke-width="4"/><path d="M6 2a5 5 0 1 0 5 5L8 7 6 5z" fill="#eee" stroke="#eee"/></svg></button>
        </div>
        <div class="cmdmain">
          <pre class="hist">Select objects:
Command: "A-DOOR-PHGT"</pre>
          <div class="cmdline">
            <button aria-label="Recent commands"><svg viewBox="0 0 36 22"><rect x="1" y="1" width="22" height="20" fill="#e3e6ec" stroke="#9aa0ab" stroke-width="2"/><path d="M5 5l6 5-6 5M12 16h6" fill="none" stroke="#333" stroke-width="2"/><path d="M28 9h8l-4 5z" fill="#777"/></svg></button>
            <input type="text" aria-label="Command line" placeholder="Type a command">
          </div>
        </div>
      </section>
    </div>

    <aside class="props">
      <h2 class="phead"><i class="pgrip"></i>Properties</h2>
      <div class="pbody">
        <div class="psel">
          <div class="combo"><select aria-label="Selection"><option>No selection</option></select><svg class="chev"><use href="#i-chev"/></svg></div>
          <div class="pbtns">
            <button aria-label="Toggle PICKADD"><svg class="ico" viewBox="0 0 26 26"><path d="M5 1h20v20M1 5h20v20H1z" stroke="#555" stroke-dasharray="2 1" stroke-width="1.500"/><path d="M11 10v10M6 15h10" stroke="#13921c" stroke-width="4"/></svg></button>
            <button aria-label="Select objects"><svg class="ico" viewBox="0 0 26 26"><path d="M8 2h10v9H8z" fill="#b7d69c" stroke="#3f7a2f"/><path d="M6 6q-8 8 2 12 3 0 4-2"/><path d="M14 7v14l3-3 3 5 2-1-3-5h4z" fill="#fff" stroke-width="1.500"/></svg></button>
            <button aria-label="Quick select"><svg class="ico" viewBox="0 0 26 26"><path d="M2 2h12v21H2z" fill="#a9cf8e" stroke="#2f6e24"/><path d="M10 7v14l3-3 3 5 2-1-3-5h4z" fill="#fff" stroke-width="1.500"/><path d="M22 2l-6 7h4l-2 6 8-9h-4z" fill="#f7a21b" stroke="#e88a10" stroke-width="1"/></svg></button>
          </div>
        </div>
        <div class="plist">
          <div class="psecs">
            <section>
              <button class="sec">General<svg class="mini"><use href="#i-triup"/></svg></button>
              <table>
                <tr><th>Color</th><td><i class="swatch"></i>ByLayer</td></tr>
                <tr><th>Layer</th><td>A-DOOR-PHGT</td></tr>
                <tr><th>Linetype</th><td><i class="thin"></i>ByLayer</td></tr>
                <tr><th>Linetype scale</th><td>1</td></tr>
                <tr><th>Lineweight</th><td><i class="thick"></i>ByLayer</td></tr>
                <tr><th>Transparency</th><td>ByLayer</td></tr>
                <tr><th>Thickness</th><td>0</td></tr>
              </table>
            </section>
            <section>
              <button class="sec">3D Visualization<svg class="mini"><use href="#i-triup"/></svg></button>
              <table>
                <tr><th>Material</th><td>ByLayer</td></tr>
                <tr><th>Shadow display</th><td>Casts and Receives Shadows</td></tr>
              </table>
            </section>
            <section>
              <button class="sec">Plot style<svg class="mini"><use href="#i-triup"/></svg></button>
              <table>
                <tr><th>Plot style</th><td class="ro">ByColor</td></tr>
                <tr><th>Plot style table</th><td>None</td></tr>
                <tr><th>Plot table attached to</th><td class="ro">Model</td></tr>
                <tr><th>Plot table type</th><td class="ro">Not available</td></tr>
              </table>
            </section>
            <section>
              <button class="sec">View<svg class="mini"><use href="#i-triup"/></svg></button>
              <table>
                <tr><th>Center X</th><td class="ro">5625.7044</td></tr>
                <tr><th>Center Y</th><td class="ro">3415.1533</td></tr>
                <tr><th>Center Z</th><td class="ro">0</td></tr>
                <tr><th>Height</th><td class="ro">4531.9259</td></tr>
                <tr><th>Width</th><td class="ro">8584.8678</td></tr>
              </table>
            </section>
            <section class="cut">
              <button class="sec">Misc<svg class="mini"><use href="#i-triup"/></svg></button>
              <table>
                <tr><th>Annotation scale</th><td>1:1</td></tr>
                <tr><th>UCS icon On</th><td>Yes</td></tr>
              </table>
            </section>
          </div>
          <div class="pscroll"><i></i></div>
        </div>
      </div>
    </aside>
  </main>
</div>
<script src="app.js"></script>
</body>
</html>
```
FILE: app.js
```js
// The dynamic input opens with its auto-completed part selected.
var dyn = document.getElementById('dyn');
dyn.focus();
dyn.setSelectionRange(3, dyn.value.length);
```
FILE: styles.css
```css
* { box-sizing: border-box; }
body { margin: 0; background: #f4f4f4; font: 17px/24px "Open Sans", "Noto Sans", sans-serif; color: #111; }
button, input, select { font: inherit; color: inherit; margin: 0; }
button { background: none; border: 0; padding: 0; display: flex; align-items: center; justify-content: center; flex: none; }
a { color: inherit; text-decoration: none; }
i { font-style: normal; display: block; flex: none; }
svg { display: block; flex: none; }
.sprite { position: absolute; width: 0; height: 0; }
.ico { width: 26px; height: 26px; fill: none; stroke: #4a4d52; stroke-width: 2; }
.mini { width: 12px; height: 12px; }
.chev { width: 14px; height: 12px; fill: none; stroke: #444; }
.pale { stroke: #a9a9a9; }

.app { min-height: 100vh; margin-left: 2px; display: flex; flex-direction: column; background: #686868; }

/* title and menu */
.head { display: grid; grid-template-columns: 64px 1fr; grid-template-rows: 39px 31px; background: #6b6b6b; }
.appbtn { grid-row: 1 / 3; margin: 1px 0 6px; border: 2px solid #161616; background: linear-gradient(#b4b4b4, #8e8e8e 75%, #666 78%, #7c7c7c); gap: 4px; }
.alogo { width: 36px; height: 42px; }
.titlebar { display: flex; border-bottom: 2px solid #505050; background: linear-gradient(#7f7f7f, #8e8e8e 50%, #9d9d9d); }
.qat { display: flex; align-items: center; padding-left: 9px; width: 308px; }
.tb { width: 36px; height: 34px; }
.qat .pale { stroke: #b4b4b4; fill: #8f8f8f; }
.drop { width: 20px; height: 34px; }
.dim { opacity: .5; }
.combo { display: flex; align-items: center; background: #e6e6e6; border: 1px solid #bdbdbd; padding: 0 4px 0 6px; }
.combo select { flex: 1; min-width: 0; width: 0; appearance: none; border: 0; background: none; padding: 0; height: 26px; }
.wsbox { width: 280px; margin: 3px 0; padding: 0 2px 0 3px; font-size: 18px; }
.wsbox select { padding-left: 3px; }
.custom { width: 26px; border: 1px solid #606060; border-width: 0 2px; }
.title { flex: 1; margin: 0; padding: 0 0 0 66px; font-size: 23px; line-height: 34px; font-weight: 400; background: #e9e9e9; display: flex; gap: 24px; align-items: center; white-space: nowrap; }
.searchgo { width: 24px; border: 1px solid #606060; }
.searchgo::before { content: ""; border: 6px solid transparent; border-left-color: #000; margin-left: 6px; }
.search { width: 277px; margin: 2px 0; border: 0; background: #f6f6f6; padding: 4px 3px 0; font-style: italic; }
.search::placeholder { color: #777; }
.info { display: flex; align-items: center; width: 392px; }
.signin { color: #f2f2f2; gap: 7px; flex: 1; justify-content: flex-start; font-size: 18px; }
.signin .mini { margin: 0 8px 0 auto; }
.helpbtn { margin-left: 17px; }
.winctl { display: flex; width: 186px; background: #e9e9e9; justify-content: flex-end; align-items: flex-start; }
.winctl button { width: 42px; height: 30px; }
.winctl .close { width: 69px; background: #b4b4b4; }
.winctl .xs { stroke: #fff; }
.dash { width: 13px; height: 3px; background: #000; margin-top: 8px; }
.rest { width: 17px; height: 17px; fill: none; stroke: #111; stroke-width: 2; }
.xs { width: 13px; height: 13px; fill: none; stroke: #222; stroke-width: 2; }
.menubar { display: flex; align-items: center; gap: 36px; padding-left: 22px; font-size: 18px; color: #f2f2f2; background: linear-gradient(#9c9c9c, #868686 45%, #757575 50%, #606060); }
.docctl { display: flex; margin-left: auto; gap: 10px; padding-right: 3px; }

/* document tabs */
.tabs { display: flex; align-items: flex-end; height: 43px; padding-left: 25px; background: linear-gradient(#a4a4a4, #999 60%, #8c8c8c); border-bottom: 2px solid #777; }
.tab { display: flex; align-items: center; width: 200px; height: 35px; padding: 0 22px 2px 25px; color: #555; background: linear-gradient(#a9a9a9, #9b9b9b); clip-path: polygon(0 100%, 7px 75%, 12px 12%, 20px 0, 185px 0, 192px 12%, 100% 100%); }
.tab.on { width: 212px; margin-left: -8px; color: #111; background: linear-gradient(#c9c9c9, #a8a8a8); clip-path: polygon(0 100%, 8px 75%, 12px 12%, 20px 0, 188px 0, 195px 12%, 202px 85%, 100% 100%); }
.tab.on > :first-child { flex: 1; justify-content: flex-start; }
.tabx svg { stroke: #777; margin-right: 8px; }
.newtab { width: 36px; margin: 0 0 6px -2px; }
.newtab svg { width: 36px; height: 26px; }

/* toolbars */
.bars { display: flex; flex-direction: column; gap: 5px; padding: 5px 1px 7px; }
.barrow { display: flex; gap: 2px; }
.bar { display: flex; height: 38px; border: 1px solid #3f3f3f; border-radius: 2px; background: #4d4d4d; }
.grip { width: 8px; margin: 5px 0 5px 1px; background: radial-gradient(circle, #111 1px, transparent 1px) 0 0 / 4px 4px; }
.barbody { display: flex; align-items: center; background: #efefef; margin: 1px; border: 1px solid #fafafa; }
.sep { width: 9px; height: 28px; background: linear-gradient(90deg, transparent 3px, #888 3px, #888 5px, transparent 5px); }
.barbody .combo { height: 34px; }
.style { width: 186px; }
.far select { padding-left: 22px; }
.space { width: 272px; font-size: 18px; }
.space select { padding-left: 7px; }
.layer { width: 466px; padding-left: 2px; font-size: 18px; }
.swatch { width: 16px; height: 16px; border: 2px solid #333; background: #f8f8f8; }
.layer select, .color select { padding-left: 6px; }
.color, .ltype, .lweight, .pstyle { font-size: 16px; }
.color { width: 236px; padding-left: 9px; }
.thin, .thick { width: 94px; height: 2px; background: #222; }
.thick { height: 5px; background: #000; }
.ltype { width: 248px; padding-left: 6px; }
.lweight { width: 194px; }
.lweight .thick { width: 55px; }
.ltype select, .lweight select { padding-left: 7px; }
.combo.pstyle { width: 187px; padding-left: 15px; color: #888; }
.pstyle select { color: #888; opacity: 1; }
.pstyle .chev { stroke: #aaa; }

/* working area */
.main { flex: 1; display: flex; gap: 8px; }
.left { flex: 1; min-width: 0; display: flex; flex-direction: column; gap: 6px; }
.work { flex: 1; display: flex; padding-right: 3px; }
.dock { width: 38px; align-self: flex-start; border: 1px solid #444; background: #4d4d4d; }
.grip.flat { width: 24px; height: 8px; margin: 2px 0 2px 4px; }
.dockbody { background: #ededed; margin-right: 1px; }
.dockbody button { width: 100%; height: 34px; }
.dockbody button:nth-child(3n) { height: 35px; }
.rightdock { display: flex; flex-direction: column; }
.rest2 { flex: 1; display: flex; flex-direction: column; }
.rest2 .dockbody { flex: 1; padding-top: 2px; }
.rule { height: 2px; margin: 4px 4px 0; background: #b5b5b5; }
.frame { flex: 1; min-width: 0; display: flex; flex-direction: column; margin: 0 8px 0 7px; border-left: 3px solid #999; border-top: 2px solid #999; background: #f0f0f0; }
.view { flex: 1; display: flex; }
.canvas { flex: 1; min-width: 0; position: relative; overflow: hidden; background: #20272f; }
.draw { position: absolute; inset: 0; width: 100%; height: 100%; }
.vlabel { position: absolute; left: 5px; top: 10px; font-size: 18px; color: #dcdfe2; }
.compass { position: absolute; right: 18px; top: 17px; width: 144px; height: 144px; }
.compass span { position: absolute; color: #b4b6b8; font: 700 22px/24px "Liberation Sans", sans-serif; }
.compass .n { left: 64px; top: 1px; }
.compass .w { left: 1px; top: 62px; }
.compass .e { right: 4px; top: 62px; }
.compass .s { left: 64px; bottom: -3px; }
.top { position: absolute; left: 44px; top: 44px; width: 56px; height: 56px; background: #8d8f95; box-shadow: inset 0 0 0 11px #9a9ba1; border: 2px solid #a8a9ac; color: #444b55; font: 700 14px/20px "Liberation Sans", sans-serif; }
.wcs { position: absolute; right: 55px; top: 185px; width: 74px; height: 26px; gap: 8px; border: 2px solid #777b84; border-radius: 6px; background: #8b8e9c; color: #545967; font: 16px/20px "Liberation Sans", sans-serif; }
.wcs .mini { opacity: .2; }
.dyn { position: absolute; left: 713px; top: 405px; width: 499px; font-size: 18px; }
.dyn input { width: 114px; height: 30px; border: 1px solid #777; background: #fbfbfb; padding: 0 6px; caret-color: #b05a2a; outline: 0; display: block; }
.dyn ::selection { background: #1e90ff; color: #dff0ff; }
.dynlist { display: flex; border: 1px solid #888; background: #f7f7f7; margin-top: 1px; height: 200px; }
.dynlist ul { flex: 1; margin: 0; padding: 0 2px 0 31px; list-style: none; }
.dynlist li { line-height: 28px; padding-left: 3px; }
.dynlist .sel { background: #1e90ff; color: #e6f3ff; }
.vs { width: 30px; padding: 10px 3px; display: flex; flex-direction: column; align-items: center; background: #f0f0f0; }
.vs .thumb { width: 24px; height: 27px; background: #c9c9c9; }
.vs .grow.a { flex: 438; }
.vs .grow.b { flex: 262; }
.vs.small { width: 26px; padding: 10px 0; }
.vs.small .thumb { margin-top: 6px; }
.grow { flex: 1; }
.layouts { display: flex; align-items: center; height: 27px; font-size: 16px; }
.lnav { display: flex; }
.lnav button { width: 24px; height: 24px; border: 1px solid #b0b0b0; }
.lnav svg { width: 13px; height: 13px; fill: #555; }
.ltab { padding: 0 6px; height: 27px; }
.model { width: 82px; margin-top: -2px; color: #f0f0f0; background: #20272f; clip-path: polygon(0 0, 100% 0, 74px 24px, 8px 24px); }
.slash { width: 12px; height: 24px; fill: none; stroke: #444; stroke-width: 2; }
.model + .slash { margin-left: -11px; }
.hs { display: flex; align-items: center; flex: none; width: 524px; margin-left: auto; padding: 0 35px 0 8px; border-left: 8px solid #e2e2e2; }
.hs .thumb { width: 26px; height: 20px; background: #c9c9c9; }
.hs .grow.a { flex: 328; }
.hs .grow.b { flex: 97; }

/* command window */
.cmd { display: flex; height: 88px; }
.cmdside { width: 36px; display: flex; flex-direction: column; align-items: center; justify-content: space-between; padding: 6px 2px 6px 0; background: linear-gradient(#7a7a7a, #4a4a4a 60%, #3c3c3c); }
.dots { width: 26px; height: 8px; background: radial-gradient(circle, #bbb 1px, transparent 1px) 0 0 / 4px 4px; }
.cmdside svg { width: 16px; height: 16px; fill: none; }
.cmdside .wrench { width: 22px; height: 22px; }
.cmdmain { flex: 1; font-family: "DejaVu Sans Mono", monospace; font-size: 18px; }
.hist { margin: 0; height: 55px; padding: 4px 3px 0; font: inherit; line-height: 24px; background: #c8c8c8; border-bottom: 2px solid #888; }
.cmdline { display: flex; align-items: center; height: 33px; padding-left: 8px; gap: 12px; background: #f8f8f8; }
.cmdline svg { width: 36px; height: 22px; }
.cmdline input { flex: 1; border: 0; background: none; padding: 0; font-style: italic; outline: 0; }
.cmdline input::placeholder { color: #8a8a8a; }

/* properties palette */
.props { width: 536px; margin: 3px 0; display: flex; flex-direction: column; font-size: 18px; }
.phead { margin: 0; height: 39px; padding-left: 4px; display: flex; gap: 8px; font-size: 22px; line-height: 38px; font-weight: 400; color: #222; background: #9f9f9f; border-radius: 6px 0 0 0; }
.pgrip { width: 6px; height: 20px; margin-top: 3px; background: repeating-linear-gradient(#444 0 2px, #999 2px 4px); }
.pbody { flex: 1; background: #f0f0f0; padding: 17px 0 16px 13px; border-radius: 4px 0 0 6px; }
.psel { display: flex; gap: 7px; height: 38px; font-size: 17px; }
.psel .combo { width: 390px; border: 2px solid #c4c4c4; border-radius: 3px; padding: 0 4px; }
.pbtns { display: flex; border: 1px solid #8e8e8e; }
.pbtns button { width: 38px; }
.pbtns button + button { border-left: 1px solid #8e8e8e; width: 39px; }
.plist { display: flex; gap: 13px; padding: 10px 0 0 3px; }
.psecs { width: 495px; flex: none; display: flex; flex-direction: column; gap: 5px; }
.sec { width: 100%; height: 31px; padding: 0 14px 2px 6px; justify-content: space-between; font-size: 17px; font-weight: 700; background: linear-gradient(#b2b2b2, #989898); border: 1px solid #858585; }
.psecs table { width: 469px; margin-left: 26px; border-collapse: separate; border-spacing: 0; table-layout: fixed; border-left: 1px solid #858585; }
.psecs tr { height: 30px; }
.psecs tr:nth-child(even) { height: 29px; }
.psecs th, .psecs td { padding: 0 6px; text-align: left; font-weight: 400; line-height: 22px; white-space: nowrap; border: 1px solid #858585; border-width: 0 1px 1px 0; }
.psecs th { width: 217px; }
.psecs td { padding: 0 0 0 3px; background: #f9f9f9; }
.psecs .ro { background: #f0f0f0; }
.psecs td i { display: inline-block; vertical-align: middle; margin: -3px 8px 0 1px; }
.psecs .cut tr:last-child > * { border-bottom: 0; }
.pscroll { flex: 1; background: #ababab; display: flex; align-items: flex-end; }
.pscroll i { width: 100%; height: 104px; background: #e6e6e6; border: 1px solid #8a8a8a; border-right: 0; }
```
